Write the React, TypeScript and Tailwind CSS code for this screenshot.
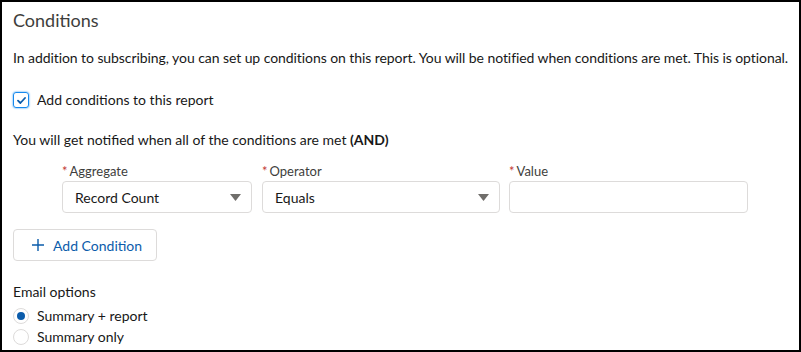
const font = { fontFamily: 'Lato, "Open Sans", sans-serif' };

function Label({ text }: { text: string }) {
  return (
    <div className="text-[13px] leading-[18px] text-[#3e3e3c] flex items-start">
      <span className="text-[#c23934] mr-[2px]">*</span>
      {text}
    </div>
  );
}

function SelectBox({ value, width }: { value: string; width: string }) {
  return (
    <div className={`${width} h-[32px] border border-[#dddbda] rounded-[4px] bg-white flex items-center justify-between pl-[12px] pr-[10px]`}>
      <span className="text-[14px] text-[#181818]">{value}</span>
      <svg width="11" height="7" viewBox="0 0 11 7">
        <path d="M0 0 H11 L5.5 7 Z" fill="#706e6b" />
      </svg>
    </div>
  );
}

export default function App() {
  return (
    <div
      className="w-[801px] h-[352px] border-2 border-black bg-white pl-[11px] pt-[6px] text-[#181818] overflow-hidden"
      style={font}
    >
      <h2 className="text-[18px] leading-[24px] text-[#3e3e3c]">Conditions</h2>

      <p className="mt-[16px] text-[14px] leading-[20px] tracking-[-0.07px]">
        In addition to subscribing, you can set up conditions on this report. You will be notified when conditions are met. This is optional.
      </p>

      <label className="mt-[22px] flex items-center gap-[8px] text-[14px] leading-[20px]">
        <span className="w-[16px] h-[16px] rounded-[3px] border border-[#1589ee] shadow-[0_0_2px_#1589ee] flex items-center justify-center">
          <svg width="9" height="7" viewBox="0 0 9 7">
            <path d="M1 3.6 L3.4 6 L8 1" stroke="#0b5cab" strokeWidth="1.8" fill="none" strokeLinecap="round" strokeLinejoin="round" />
          </svg>
        </span>
        Add conditions to this report
      </label>

      <p className="mt-[20px] text-[14px] leading-[20px]">
        You will get notified when all of the conditions are met <b>(AND)</b>
      </p>

      <div className="mt-[12px] pl-[49px] flex">
        <div className="flex flex-col gap-[1px]">
          <Label text="Aggregate" />
          <SelectBox value="Record Count" width="w-[190px]" />
        </div>
        <div className="ml-[10px] flex flex-col gap-[1px]">
          <Label text="Operator" />
          <SelectBox value="Equals" width="w-[238px]" />
        </div>
        <div className="ml-[9px] flex flex-col gap-[1px]">
          <Label text="Value" />
          <div className="w-[239px] h-[32px] border border-[#dddbda] rounded-[4px] bg-white" />
        </div>
      </div>

      <button className="mt-[16px] w-[144px] h-[32px] border border-[#dddbda] rounded-[4px] bg-white flex items-center pl-[18px] gap-[9px] text-[14px] text-[#0b5cab]">
        <svg width="12" height="12" viewBox="0 0 12 12">
          <path d="M6 0 V12 M0 6 H12" stroke="#0b5cab" strokeWidth="1.4" />
        </svg>
        Add Condition
      </button>

      <div className="mt-[21px] text-[14px] leading-[20px]">Email options</div>
      <div className="mt-[3px] flex flex-col">
        <label className="flex items-center gap-[8px] text-[14px] leading-[21px]">
          <span className="w-[16px] h-[16px] rounded-full border border-[#dddbda] flex items-center justify-center">
            <span className="w-[8px] h-[8px] rounded-full bg-[#0b5cab]" />
          </span>
          Summary + report
        </label>
        <label className="flex items-center gap-[8px] text-[14px] leading-[21px]">
          <span className="w-[16px] h-[16px] rounded-full border border-[#dddbda]" />
          Summary only
        </label>
      </div>
    </div>
  );
}
